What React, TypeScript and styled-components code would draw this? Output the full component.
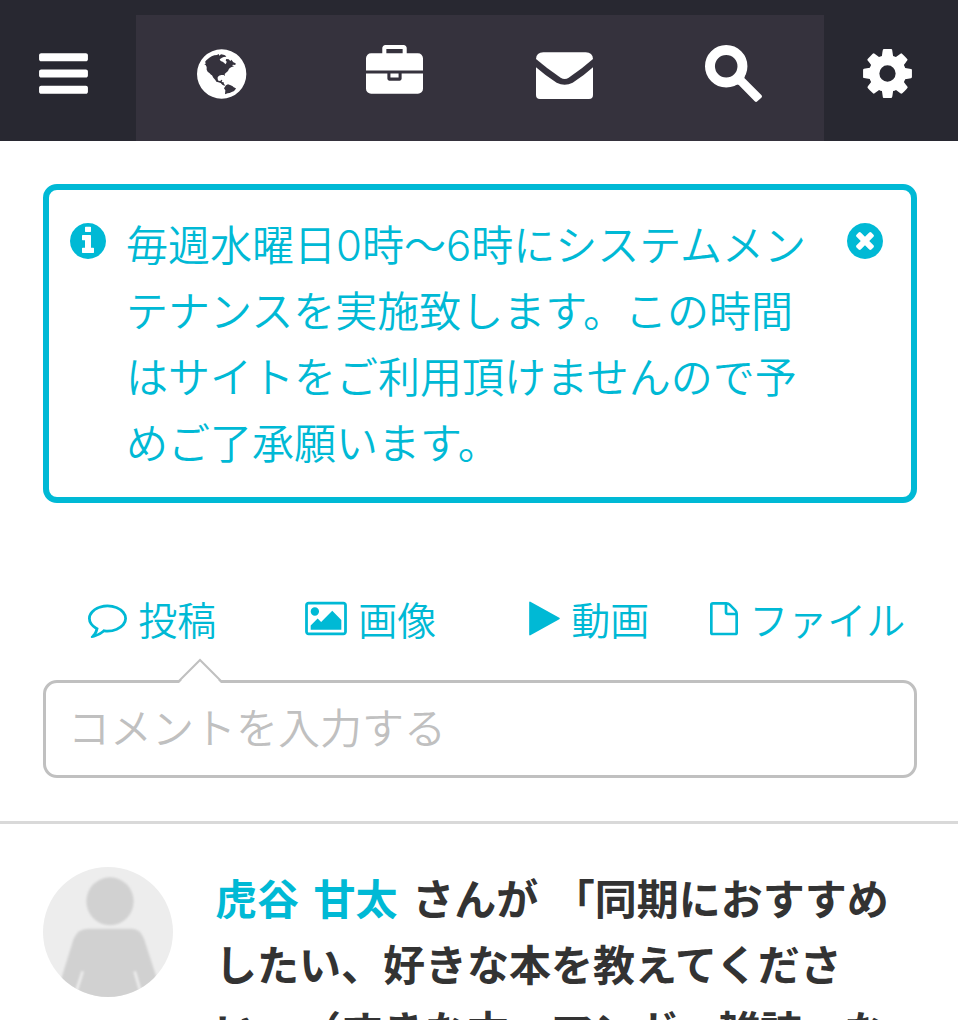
import React from "react";
import styled, { createGlobalStyle } from "styled-components";

const accent = "#00b9d5";

const GlobalStyle = createGlobalStyle`
  *, *::before, *::after { box-sizing: border-box; }
  html { scrollbar-width: none; }
  body {
    margin: 0;
    background: #fff;
    color: #333;
    font-family: "Noto Sans CJK JP", "Noto Sans", sans-serif;
    font-size: 42px;
    line-height: 66px;
    text-spacing-trim: space-all;
  }
`;

const Header = styled.header`
  display: flex;
  padding-top: 15px;
  background: #282831;
`;

const HeaderButton = styled.button<{ $side: "left" | "right" }>`
  display: flex;
  flex: none;
  margin: 0;
  border: 0;
  background: none;
  color: #fff;
  cursor: pointer;
  padding: ${(p) => (p.$side === "left" ? "30px 44px 39px 35px" : "30px 42px 39px 35px")};
`;

const Nav = styled.nav`
  flex: 1;
  display: flex;
  justify-content: space-between;
  padding: 30px 62px 39px 61px;
  background: #35323d;
`;

const NavLink = styled.a`
  display: flex;
  color: #fff;
`;

const Glyph = styled.svg<{ $w: number; $h: number }>`
  display: block;
  flex: none;
  width: ${(p) => p.$w}px;
  height: ${(p) => p.$h}px;
  fill: currentColor;
`;

const Section = styled.section`
  padding: 43px 41px 43px 43px;
  border-bottom: 3px solid #d9d9d9;
`;

const Notice = styled.div`
  display: flex;
  align-items: flex-start;
  padding: 20px 25px 23px 18px;
  border: 6px solid ${accent};
  border-radius: 14px;
  color: ${accent};
`;

const NoticeIcon = styled.span`
  display: flex;
  padding-top: 10px;
`;

const NoticeText = styled.p`
  flex: 1;
  margin: 0 18px 0 17px;
  font-weight: 350;
`;

const Digit = styled.span`
  font-family: Inter, sans-serif;
  line-height: 1;
`;

const CloseButton = styled.button`
  display: flex;
  margin: 0;
  padding: 10px 0 0;
  border: 0;
  background: none;
  color: inherit;
  cursor: pointer;
`;

const Tabs = styled.div`
  display: grid;
  grid-template-columns: repeat(4, 1fr);
  margin-top: 85px;
`;

const Tab = styled.button`
  display: flex;
  align-items: center;
  justify-content: center;
  gap: 11px;
  margin: 0;
  padding: 0;
  border: 0;
  background: none;
  color: ${accent};
  font: inherit;
  font-size: 39px;
  font-weight: 350;
  line-height: 60px;
  white-space: nowrap;
  cursor: pointer;
`;

const Composer = styled.div`
  position: relative;
  margin-top: 32px;
`;

const Pointer = styled.svg`
  position: absolute;
  left: 134px;
  top: -22px;
  width: 46px;
  height: 26px;
`;

const CommentInput = styled.input`
  display: block;
  width: 100%;
  height: 98px;
  padding: 0 22px 8px;
  border: 3px solid #c0c0c0;
  border-radius: 14px;
  background: #fff;
  color: #333;
  font: inherit;
  font-weight: 350;
  outline: none;

  &::placeholder {
    color: #c0c0c0;
    opacity: 1;
  }
`;

const Post = styled.article`
  display: flex;
  align-items: flex-start;
  gap: 42px;
  padding: 43px 41px 43px 43px;
`;

const Avatar = styled.svg`
  flex: none;
  width: 130px;
  height: 130px;
  border-radius: 50%;
`;

const PostTitle = styled.p`
  flex: 1;
  margin: 1px 0 0;
  font-family: "DejaVu Sans", "Noto Sans CJK JP", sans-serif;
  font-weight: 700;
`;

const AuthorLink = styled.a`
  color: ${accent};
  text-decoration: none;
`;

const paths = {
  bars: "M1664 1344v128q0 26-19 45t-45 19h-1408q-26 0-45-19t-19-45v-128q0-26 19-45t45-19h1408q26 0 45 19t19 45zm0-512v128q0 26-19 45t-45 19h-1408q-26 0-45-19t-19-45v-128q0-26 19-45t45-19h1408q26 0 45 19t19 45zm0-512v128q0 26-19 45t-45 19h-1408q-26 0-45-19t-19-45v-128q0-26 19-45t45-19h1408q26 0 45 19t19 45z",
  briefcase:
    "M640 256h512v-128h-512v128zm1152 640v480q0 66-47 113t-113 47h-1472q-66 0-113-47t-47-113v-480h672v160q0 26 19 45t45 19h320q26 0 45-19t19-45v-160h672zm-768 0v128h-256v-128h256zm768-480v384h-1792v-384q0-66 47-113t113-47h352v-160q0-40 28-68t68-28h576q40 0 68 28t28 68v160h352q66 0 113 47t47 113z",
  cog: "M1152 896q0-106-75-181t-181-75-181 75-75 181 75 181 181 75 181-75 75-181zm512-109v222q0 12-8 23t-20 13l-185 28q-19 54-39 91 35 50 107 138 10 12 10 25t-9 23q-27 37-99 108t-94 71q-12 0-26-9l-138-108q-44 23-91 38-16 136-29 186-7 28-36 28h-222q-14 0-24.5-8.5t-11.5-21.5l-28-184q-49-16-90-37l-141 107q-10 9-25 9-14 0-25-11-126-114-165-168-7-10-7-23 0-12 8-23 15-21 51-66.5t54-70.5q-27-50-41-99l-183-27q-13-2-21-12.5t-8-23.5v-222q0-12 8-23t19-13l186-28q14-46 39-92-40-57-107-138-10-12-10-24 0-10 9-23 26-36 98.5-107.5t94.5-71.5q13 0 26 10l138 107q44-23 91-38 16-136 29-186 7-28 36-28h222q14 0 24.5 8.5t11.5 21.5l28 184q49 16 90 37l142-107q9-9 24-9 13 0 25 10 129 119 165 170 7 8 7 22 0 12-8 23-15 21-51 66.5t-54 70.5q26 50 41 98l183 28q13 2 21 12.5t8 23.5z",
  info: "M1152 1376v-160q0-14-9-23t-23-9h-96v-512q0-14-9-23t-23-9h-320q-14 0-23 9t-9 23v160q0 14 9 23t23 9h96v320h-96q-14 0-23 9t-9 23v160q0 14 9 23t23 9h448q14 0 23-9t9-23zm-128-896v-160q0-14-9-23t-23-9h-192q-14 0-23 9t-9 23v160q0 14 9 23t23 9h192q14 0 23-9t9-23zm640 416q0 209-103 385.5t-279.5 279.5-385.5 103-385.5-103-279.5-279.5-103-385.5 103-385.5 279.5-279.5 385.5-103 385.5 103 279.5 279.5 103 385.5z",
  close:
    "M1277 1122q0-26-19-45l-181-181 181-181q19-19 19-45 0-27-19-46l-90-90q-19-19-46-19-26 0-45 19l-181 181-181-181q-19-19-45-19-27 0-46 19l-90 90q-19 19-19 46 0 26 19 45l181 181-181 181q-19 19-19 45 0 27 19 46l90 90q19 19 46 19 26 0 45-19l181-181 181 181q19 19 45 19 27 0 46-19l90-90q19-19 19-46zm387-226q0 209-103 385.5t-279.5 279.5-385.5 103-385.5-103-279.5-279.5-103-385.5 103-385.5 279.5-279.5 385.5-103 385.5 103 279.5 279.5 103 385.5z",
  comment:
    "M896 384q-204 0-381.5 69.5t-282 187.5-104.5 255q0 112 71.5 213.5t201.5 175.5l87 50-27 96q-24 91-70 172 152-63 275-171l43-38 57 6q69 8 130 8 204 0 381.5-69.5t282-187.5 104.5-255-104.5-255-282-187.5-381.5-69.5zm896 512q0 174-120 321.5t-326 233-450 85.5q-70 0-145-8-198 175-460 242-49 14-114 22h-5q-15 0-27-10.5t-16-27.5v-1q-3-4-.5-12t2-10 4.5-9.5l6-9 7-8.5 8-9q7-8 31-34.5t34.5-38 31-39.5 32.5-51 27-59 26-76q-157-89-247.5-220t-90.5-281q0-130 71-248.5t191-204.5 286-136.5 348-50.5q244 0 450 85.5t326 233 120 321.5z",
  picture:
    "M576 576q0 80-56 136t-136 56-136-56-56-136 56-136 136-56 136 56 56 136zm1024 384v448h-1408v-192l320-320 160 160 512-512zm96-704h-1600q-13 0-22.5 9.5t-9.5 22.5v1216q0 13 9.5 22.5t22.5 9.5h1600q13 0 22.5-9.5t9.5-22.5v-1216q0-13-9.5-22.5t-22.5-9.5zm160 32v1216q0 66-47 113t-113 47h-1600q-66 0-113-47t-47-113v-1216q0-66 47-113t113-47h1600q66 0 113 47t47 113z",
  play: "M1576 927l-1328 738q-23 13-39.5 3t-16.5-36v-1472q0-26 16.5-36t39.5 3l1328 738q23 13 23 31t-23 31z",
};

type IconProps = { d: string; box?: string; w?: number; h?: number };

const Icon = ({ d, box = "0 0 1792 1792", w = 57, h = 57 }: IconProps) => (
  <Glyph $w={w} $h={h} viewBox={box} aria-hidden="true">
    <path d={d} />
  </Glyph>
);

// Disc with the American continents cut out of it.
const GlobeIcon = () => (
  <Glyph $w={57} $h={57} viewBox="36 22 171 171" aria-hidden="true">
    <path
      fillRule="evenodd"
      d="M110 35A74 74 0 1 1 110 183A74 74 0 1 1 110 35Z
        M58 80L63 77L60 73L64 68L73 60L80 56L88 53L96 52L101 49L103 54L108 50L115 51L120 53L124 57L116 58L111 60L104 65L107 70L113 72L118 76L121 80L124 76L125 72L122 68L124 64L131 65L136 70L139 66L142 70L145 74L152 77L151 82L144 81L141 83L147 86L138 89L132 93L129 100L123 105L119 109L120 115L116 112L109 112L102 114L98 119L98 125L101 130L107 129L110 126L112 127L110 133L116 134L117 140L121 142L118 144L112 141L107 136L100 134L94 132L91 127L85 120L81 113L78 111L74 107L68 102L65 96L65 88L62 82Z
        M123 143L129 140L137 143L143 146L146 149L153 152L150 157L146 161L140 163L134 166L128 167L120 170L121 158L117 152Z"
    />
  </Glyph>
);

const MailIcon = () => (
  <Glyph $w={57} $h={57} viewBox="0 0 171 171" aria-hidden="true">
    <path d="M0 42Q1 22 22 22H149Q170 22 171 42Q140 70 98 98Q86 106 74 98Q32 70 0 42Z" />
    <path d="M0 67Q28 92 62 113Q86 125 110 113Q144 92 171 67V150Q171 162 159 162H12Q0 162 0 150Z" />
  </Glyph>
);

const SearchIcon = () => (
  <Glyph $w={57} $h={57} viewBox="0 0 172 172" aria-hidden="true">
    <circle cx="64" cy="64" r="49" fill="none" stroke="currentColor" strokeWidth="30" />
    <path d="M122 88Q116 98 121 102L170 151Q174 155 170 159L158 170Q154 174 150 170L102 121Q98 117 88 122Z" />
  </Glyph>
);

const FileIcon = () => (
  <Glyph $w={28} $h={39} viewBox="0 0 84 117" aria-hidden="true">
    <path
      d="M9 13H49Q55 13 59 17L76 34Q80 38 80 44V101Q80 105 76 105H8Q4 105 4 101V17Q4 13 9 13ZM48 13V40Q48 45 53 45H80"
      fill="none"
      stroke="currentColor"
      strokeWidth="8"
      strokeLinejoin="round"
    />
  </Glyph>
);

const App = () => (
  <>
    <GlobalStyle />
    <Header>
      <HeaderButton $side="left" type="button" aria-label="メニュー">
        <Icon d={paths.bars} />
      </HeaderButton>
      <Nav>
        <NavLink href="#home" aria-label="ホーム">
          <GlobeIcon />
        </NavLink>
        <NavLink href="#work" aria-label="仕事">
          <Icon d={paths.briefcase} />
        </NavLink>
        <NavLink href="#mail" aria-label="メール">
          <MailIcon />
        </NavLink>
        <NavLink href="#search" aria-label="検索">
          <SearchIcon />
        </NavLink>
      </Nav>
      <HeaderButton $side="right" type="button" aria-label="設定">
        <Icon d={paths.cog} />
      </HeaderButton>
    </Header>

    <main>
      <Section>
        <Notice role="status">
          <NoticeIcon>
            <Icon d={paths.info} w={42} h={42} />
          </NoticeIcon>
          <NoticeText>
            毎週水曜日<Digit>0</Digit>時〜<Digit>6</Digit>
            時にシステムメンテナンスを実施致します。この時間はサイトをご利用頂けませんので予めご了承願います。
          </NoticeText>
          <CloseButton type="button" aria-label="閉じる">
            <Icon d={paths.close} w={42} h={42} />
          </CloseButton>
        </Notice>

        <Tabs>
          <Tab type="button">
            <Icon d={paths.comment} w={39} h={39} />
            投稿
          </Tab>
          <Tab type="button">
            <Icon d={paths.picture} box="-64 0 1920 1792" w={42} h={39} />
            画像
          </Tab>
          <Tab type="button">
            <Icon d={paths.play} box="192 0 1408 1792" w={31} h={39} />
            動画
          </Tab>
          <Tab type="button">
            <FileIcon />
            ファイル
          </Tab>
        </Tabs>

        <Composer>
          <CommentInput type="text" placeholder="コメントを入力する" aria-label="コメント" />
          <Pointer viewBox="0 0 46 26" aria-hidden="true">
            <path d="M2 25L23 3L44 25V26H2Z" fill="#fff" />
            <path d="M1 24L23 2L45 24" fill="none" stroke="#c0c0c0" strokeWidth="2" />
          </Pointer>
        </Composer>
      </Section>

      <Post>
        <Avatar viewBox="0 0 390 390" aria-hidden="true">
          <defs>
            <filter id="soften">
              <feGaussianBlur stdDeviation="3" />
            </filter>
          </defs>
          <rect width="390" height="390" fill="#ededed" />
          <g filter="url(#soften)">
            <ellipse cx="201" cy="103" rx="71" ry="72" fill="#d1d1d1" />
            <path
              d="M136 185H266Q292 185 303 215L345 345V400H40L58 325L92 215Q104 185 136 185Z"
              fill="#d1d1d1"
            />
            <path d="M119 313L96 385M275 313L296 385" stroke="#ededed" strokeWidth="8" />
          </g>
        </Avatar>
        <PostTitle>
          <AuthorLink href="#author">虎谷 甘太</AuthorLink> さんが
          「同期におすすめしたい、好きな本を教えてください。（すきな本、マンガ、雑誌、な
        </PostTitle>
      </Post>
    </main>
  </>
);

export default App;
